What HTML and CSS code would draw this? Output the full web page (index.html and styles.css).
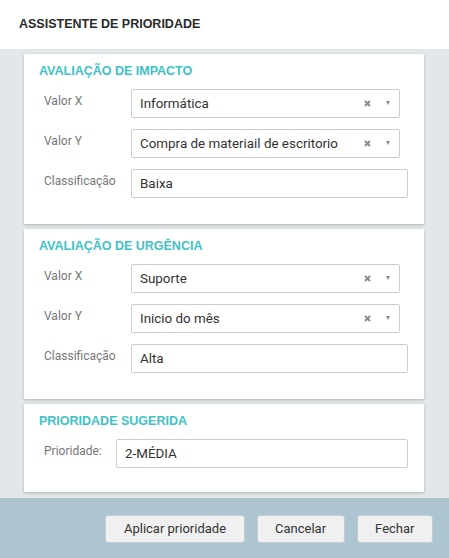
FILE: index.html
```html
<!DOCTYPE html>
<html lang="pt">
<head>
<meta charset="utf-8">
<title>Assistente de prioridade</title>
<link rel="stylesheet" href="styles.css">
</head>
<body>
<div class="dialog">
  <div class="header"><h1 class="title">ASSISTENTE DE PRIORIDADE</h1></div>
  <div class="main">
    <section class="card">
      <h2 class="card-title">AVALIAÇÃO DE IMPACTO</h2>
      <div class="rows">
        <div class="row">
          <span class="label">Valor X</span>
          <div class="select"><span class="value">Informática</span><svg class="clear" viewBox="0 0 7 7"><path d="M1 1L6 6M6 1L1 6"/></svg><span class="arrow"></span></div>
        </div>
        <div class="row">
          <span class="label">Valor Y</span>
          <div class="select"><span class="value">Compra de materiail de escritorio</span><svg class="clear" viewBox="0 0 7 7"><path d="M1 1L6 6M6 1L1 6"/></svg><span class="arrow"></span></div>
        </div>
        <div class="row">
          <span class="label">Classificação</span>
          <div class="input">Baixa</div>
        </div>
      </div>
    </section>
    <section class="card">
      <h2 class="card-title">AVALIAÇÃO DE URGÊNCIA</h2>
      <div class="rows">
        <div class="row">
          <span class="label">Valor X</span>
          <div class="select"><span class="value">Suporte</span><svg class="clear" viewBox="0 0 7 7"><path d="M1 1L6 6M6 1L1 6"/></svg><span class="arrow"></span></div>
        </div>
        <div class="row">
          <span class="label">Valor Y</span>
          <div class="select"><span class="value">Inicio do mês</span><svg class="clear" viewBox="0 0 7 7"><path d="M1 1L6 6M6 1L1 6"/></svg><span class="arrow"></span></div>
        </div>
        <div class="row">
          <span class="label">Classificação</span>
          <div class="input">Alta</div>
        </div>
      </div>
    </section>
    <section class="card card-short">
      <h2 class="card-title">PRIORIDADE SUGERIDA</h2>
      <div class="rows">
        <div class="row row-narrow">
          <span class="label">Prioridade:</span>
          <div class="input">2-MÉDIA</div>
        </div>
      </div>
    </section>
  </div>
  <div class="footer">
    <button class="btn">Aplicar prioridade</button>
    <button class="btn">Cancelar</button>
    <button class="btn">Fechar</button>
  </div>
</div>
</body>
</html>
```
FILE: styles.css
```css
* { box-sizing: border-box; }
html, body { margin: 0; padding: 0; }
body {
  font-family: Roboto, "Liberation Sans", Arial, sans-serif;
  color: #333;
  background: #fff;
  width: 449px;
  height: 558px;
  overflow: hidden;
}
.dialog { display: flex; flex-direction: column; height: 558px; }
.header {
  height: 49px;
  display: flex;
  align-items: center;
  padding: 0 0 2px 19px;
  background: #fff;
}
.title {
  margin: 0;
  font-family: "Liberation Sans", Arial, sans-serif;
  font-size: 12.5px;
  font-weight: 700;
  color: #2a2a2a;
}
.main {
  background: #e2e7ea;
  padding: 5px 25px 6px 24px;
  display: flex;
  flex-direction: column;
  gap: 5px;
}
.card {
  background: #fff;
  box-shadow: 0 1px 3px rgba(0,0,0,0.22);
  padding: 0 16px 26px 20px;
}
.card-short { padding-bottom: 24px; }
.card-title {
  margin: 0 0 0 -5px;
  height: 35px;
  line-height: 35px;
  font-family: "Liberation Sans", Arial, sans-serif;
  font-size: 12.5px;
  font-weight: 700;
  color: #3fc2c6;
}
.rows { display: flex; flex-direction: column; gap: 11px; }
.row { display: flex; align-items: flex-start; }
.label {
  width: 87px;
  flex: none;
  font-size: 12px;
  line-height: 16px;
  padding-top: 4px;
  color: #777;
}
.row-narrow .label { width: 72px; }
.select, .input {
  height: 29px;
  border: 1px solid #ccc;
  border-radius: 2px;
  display: flex;
  align-items: center;
  padding-left: 8px;
  font-size: 13.4px;
  color: #333;
  background: #fff;
}
.select { width: 269px; padding-right: 9px; }
.input { flex: 1; }
.value { flex: 1; white-space: nowrap; overflow: hidden; }
.clear {
  width: 7px;
  height: 7px;
  margin-right: 15px;
  fill: none;
  stroke: #8a8a8a;
  stroke-width: 1.9;
}
.arrow {
  width: 0;
  height: 0;
  border-left: 2.5px solid transparent;
  border-right: 2.5px solid transparent;
  border-top: 4px solid #8a8a8a;
  margin-top: -1px;
}
.footer {
  flex: 1;
  background: #adc4d1;
  display: flex;
  justify-content: flex-end;
  align-items: center;
  gap: 12px;
  padding: 1px 16px 0 0;
}
.btn {
  height: 28px;
  padding: 0 17.5px;
  border: 1px solid #c4ccd1;
  border-radius: 3px;
  background: #f0f0f0;
  font-family: Roboto, "Liberation Sans", Arial, sans-serif;
  font-size: 13px;
  color: #333;
}
```
